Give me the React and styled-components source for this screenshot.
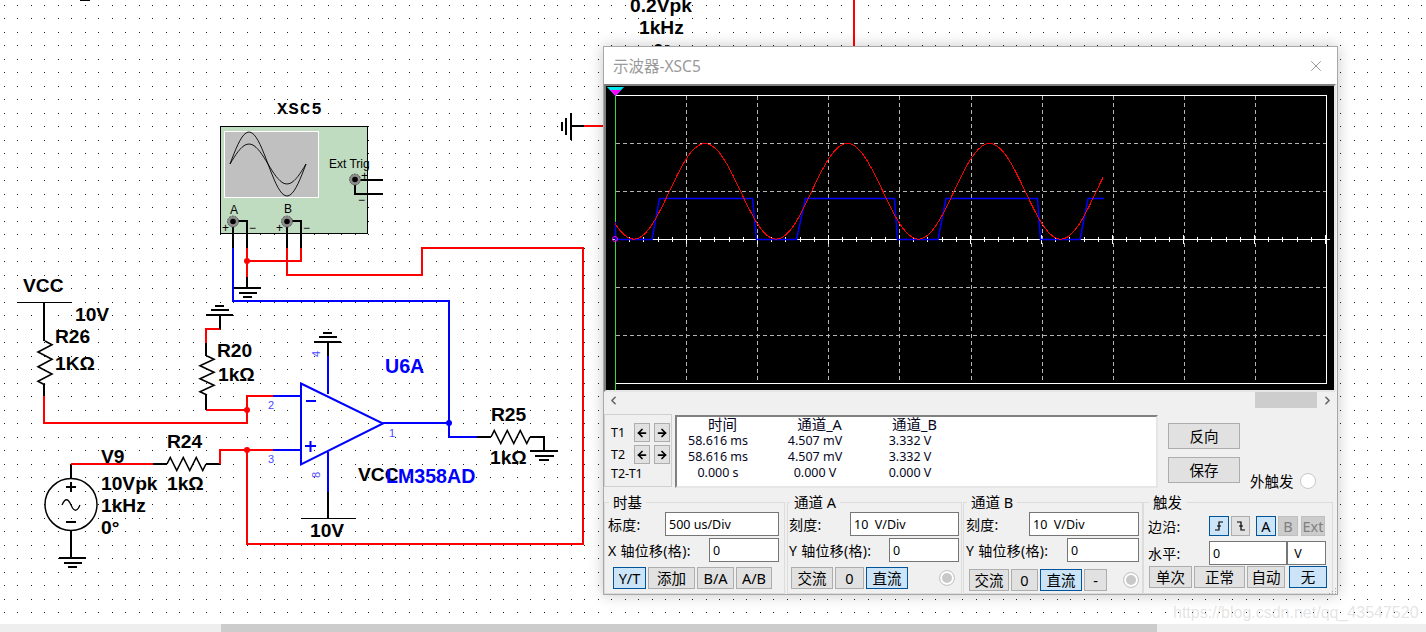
import React from "react";
import styled, { createGlobalStyle } from "styled-components";
import { ArrowLeft, ArrowRight, ChevronLeft, ChevronRight, X } from "lucide-react";

const RED = "#ff0000";
const BLUE = "#0000ff";
const BLACK = "#000000";

// grid dots of the schematic sheet
function dotsPath() {
  let d = "";
  for (let i = 0; i < 106; i++) {
    for (let j = 0; j < 47; j++) {
      const x = Math.floor(4 + i * 13.5);
      const y = Math.floor(5 + j * 13.5);
      d += `M${x} ${y}h1v1h-1z`;
    }
  }
  return d;
}

function zigH(x0, x1, y, amp = 6.5) {
  const step = (x1 - x0) / 6;
  let d = `M${x0} ${y}`;
  [-1, 1, -1, 1, -1, 1].forEach((s, i) => {
    d += `L${x0 + step * (i + 0.5)} ${y + s * amp}`;
  });
  return `${d}L${x1} ${y}`;
}

function zigV(x, y0, y1, amp = 7) {
  const step = (y1 - y0) / 6;
  let d = `M${x} ${y0}`;
  [1, -1, 1, -1, 1, -1].forEach((s, i) => {
    d += `L${x + s * amp} ${y0 + step * (i + 0.5)}`;
  });
  return `${d}L${x} ${y1}`;
}

function sinePath(amp) {
  let d = "";
  for (let x = 230; x <= 307; x += 2) {
    const y = 164 - amp * Math.sin(((x - 230) / 76) * Math.PI * 2);
    d += `${d ? "L" : "M"}${x} ${y.toFixed(1)}`;
  }
  return d;
}

function redTrace() {
  let d = "";
  for (let x = 615; x <= 1104; x += 2) {
    const y = 191.3 - 47.8 * Math.cos(((x - 705) / 142.3) * Math.PI * 2);
    d += `${d ? "L" : "M"}${x} ${y.toFixed(1)}`;
  }
  return d;
}

const BLUE_TRACE =
  "M615.5 222V239.5H652L659.5 198.5H752.5L756.5 239.5H796.5L805.5 198.5H894.5L897.5 239.5H938L946 198.5H1037.5L1040.5 239.5H1080L1088 198.5H1104";

const TIME_TICKS = Array.from({ length: 51 }, (_, i) => 615.5 + i * 14.2);
const V_GRID = [686.5, 757.5, 828.5, 899.5, 971.5, 1042.5, 1113.5, 1184.5, 1255.5];
const H_GRID = [143.5, 191.5, 287.5, 335.5];

const WIRES = [
  // scope A channel
  [BLACK, "M233 221V248"],
  [BLUE, "M233 248V301H449V423"],
  [BLACK, "M233 221H247V248"],
  [RED, "M247 248V277"],
  [BLACK, "M247 277V287"],
  [RED, "M247 261H301V248"],
  [BLACK, "M301 248V221H287"],
  [BLACK, "M287 221V248"],
  [RED, "M287 248V275H422V248H583V544H247V450"],
  // VCC and R26
  [BLACK, "M44 303V341"],
  [BLACK, "M44 385V396"],
  [RED, "M44 396V423H247V396H273"],
  [BLUE, "M273 396H301"],
  // R20
  [RED, "M247 410H206"],
  [BLACK, "M206 410V395"],
  [BLACK, "M206 356V343"],
  [RED, "M206 343V329H220"],
  [BLACK, "M220 329V315"],
  // V9 and R24
  [BLACK, "M71 478V464"],
  [RED, "M71 464H153"],
  [BLACK, "M153 464H167"],
  [BLACK, "M206 464H220"],
  [RED, "M220 464V450H273"],
  [BLUE, "M273 450H301"],
  [BLACK, "M71 531V557"],
  // op amp supply pins
  [BLACK, "M328 342V356"],
  [BLUE, "M328 356V394"],
  [BLUE, "M328 452V492"],
  [BLACK, "M328 492V518"],
  // output and R25
  [BLUE, "M383 423H449V437H477"],
  [BLACK, "M477 437H491"],
  [BLACK, "M530 437H544V450"],
  // ext trig
  [BLACK, "M355 180H383M355 180V194H383"],
  // sheet leftovers behind the window
  [RED, "M584 126H604"],
  [BLACK, "M571 126H584"],
  [RED, "M854 0V48"],
  [BLACK, "M80 0H90"],
];

const THIN_LINES = ["M17 302.500H72", "M301 518.500H356"];

const GROUNDS = [
  [234, 287.5, 27, 1],
  [59, 557.5, 27, 1],
  [530, 450.5, 28, 1],
  [206, 314.5, 27, -1],
  [314, 341.5, 27, -1],
];

const LABELS = [
  ["VCC", 23, 292],
  ["10V", 75, 321],
  ["R26", 55, 343],
  ["1KΩ", 55, 370],
  ["R20", 217, 357],
  ["1kΩ", 218, 381],
  ["R24", 167, 448],
  ["V9", 101, 463],
  ["10Vpk", 101, 490],
  ["1kΩ", 167, 490],
  ["1kHz", 101, 512],
  ["0°", 101, 534],
  ["VCC", 358, 481],
  ["10V", 310, 537],
  ["R25", 491, 421],
  ["1kΩ", 490, 464],
  ["0.2Vpk", 630, 12],
  ["1kHz", 639, 34],
  ["0°", 653, 57],
];

function Ground({ x, y, w, dir }) {
  return (
    <>
      <Wire $color={BLACK} d={`M${x} ${y}h${w}`} />
      <Wire $color={BLACK} d={`M${x + 5} ${y + dir * 5}h${w - 9}`} />
      <Wire $color={BLACK} d={`M${x + 9} ${y + dir * 9}h${w - 18}`} />
    </>
  );
}

function Terminal({ x, y }) {
  return (
    <>
      <circle cx={x} cy={y} r="5.5" fill="#8c8c8c" stroke="#555" strokeDasharray="2 1" />
      <circle cx={x} cy={y} r="2.8" fill="#000" />
    </>
  );
}

function Schematic() {
  return (
    <Sheet viewBox="0 0 1426 624">
      <path d={dotsPath()} fill="#1a1a1a" shapeRendering="crispEdges" />

      {/* XSC5 */}
      <MonoLabel x="277" y="114">XSC5</MonoLabel>
      <rect x="220.5" y="126.5" width="147" height="107" fill="#c0dcc0" stroke="#000" />
      <rect x="224.5" y="131.5" width="94" height="66" fill="#c0c0c0" stroke="#fff" />
      <path d={sinePath(32)} fill="none" stroke="#000" strokeWidth="0.9" />
      <path d={sinePath(20)} fill="none" stroke="#000" strokeWidth="0.9" />
      <SmallLabel x="329" y="168">Ext Trig</SmallLabel>
      <SmallLabel x="230" y="214">A</SmallLabel>
      <SmallLabel x="284" y="213">B</SmallLabel>
      <SmallLabel x="222" y="232">+</SmallLabel>
      <SmallLabel x="249" y="232">−</SmallLabel>
      <SmallLabel x="276" y="232">+</SmallLabel>
      <SmallLabel x="303" y="232">−</SmallLabel>
      <SmallLabel x="361" y="180">+</SmallLabel>
      <SmallLabel x="358" y="204">−</SmallLabel>

      {WIRES.map(([color, d]) => (
        <Wire key={d} $color={color} d={d} />
      ))}
      {THIN_LINES.map((d) => (
        <Thin key={d} d={d} />
      ))}
      {GROUNDS.map(([x, y, w, dir]) => (
        <Ground key={`${x}-${y}`} x={x} y={y} w={w} dir={dir} />
      ))}

      {/* ground stub left of the window */}
      <Wire $color={BLACK} d="M571 113V140" />
      <Wire $color={BLACK} d="M566 118V135" />
      <Wire $color={BLACK} d="M562 122V131" />

      <Terminal x={233} y={221.5} />
      <Terminal x={287} y={221.5} />
      <Terminal x={355} y={179.5} />

      {/* resistors */}
      <Zig d={zigV(45, 341, 385)} />
      <Zig d={zigV(207, 356, 395)} />
      <Zig d={zigH(167, 206, 464)} />
      <Zig d={zigH(491, 530, 437)} />

      {/* AC source */}
      <circle cx="71" cy="504.5" r="26" fill="none" stroke="#000" strokeWidth="1.5" />
      <Wire $color={BLACK} d="M66 487h10M71 482v10M66 522h10" />
      <path d="M62 505c3-7 6-7 9 0s6 7 9 0" fill="none" stroke="#000" strokeWidth="1.3" />

      {/* op amp */}
      <path d="M301 383.5L383 423.5L301 464.5Z" fill="none" stroke={BLUE} strokeWidth="2" />
      <path d="M306 401h10M305 446h11M310.500 441v11" stroke={BLUE} strokeWidth="2" fill="none" />
      <circle cx="247" cy="410" r="3" fill={RED} />
      <circle cx="247" cy="450" r="3" fill={RED} />
      <circle cx="247" cy="261" r="3" fill={RED} />
      <circle cx="449" cy="423" r="3" fill={BLUE} />

      {LABELS.map(([text, x, y]) => (
        <Label key={`${text}-${x}`} x={x} y={y}>{text}</Label>
      ))}
      <Label $blue x="385" y="373">U6A</Label>
      <Label $blue x="386" y="483">LM358AD</Label>

      <Pin x="268" y="409">2</Pin>
      <Pin x="268" y="463">3</Pin>
      <Pin x="389" y="437">1</Pin>
      <Pin transform="rotate(-90 320 357)" x="320" y="357">4</Pin>
      <Pin transform="rotate(-90 320 478)" x="320" y="478">8</Pin>
    </Sheet>
  );
}

function ScopeScreen() {
  return (
    <Screen>
      <svg width="728" height="304" viewBox="606 86 728 304">
        {V_GRID.map((x) => (
          <GridLine key={x} d={`M${x} 96V383`} />
        ))}
        {H_GRID.map((y) => (
          <GridLine key={y} d={`M616 ${y}H1326`} />
        ))}
        <path d="M615 95.500H1326.500V383.500H615" fill="none" stroke="#fff" shapeRendering="crispEdges" />
        <path d="M612 239.500H1330" stroke="#fff" strokeWidth="1.5" shapeRendering="crispEdges" />
        {TIME_TICKS.map((x, i) => (
          <path
            key={x}
            d={i % 5 === 0 ? `M${x} 235V244` : `M${x} 237V242`}
            stroke="#fff"
            shapeRendering="crispEdges"
          />
        ))}
        <path d="M615.500 90V390" stroke="#30e030" shapeRendering="crispEdges" />
        <path d={BLUE_TRACE} fill="none" stroke={BLUE} strokeWidth="1.5" />
        <path d={redTrace()} fill="none" stroke={RED} shapeRendering="crispEdges" />
        <path d="M607 87H624L615.500 96Z" fill="#00e5ee" />
        <path d="M610 90H621L615.500 96Z" fill="#ff00ff" />
        <circle cx="615" cy="239" r="2.500" fill="none" stroke="#ff00ff" />
      </svg>
    </Screen>
  );
}

function CursorRow({ name, $mt }) {
  return (
    <CursorLine $mt={$mt}>
      <CursorName>{name}</CursorName>
      <ArrowBtn>
        <ArrowLeft size={12} strokeWidth={3.5} color="#000" />
      </ArrowBtn>
      <ArrowBtn>
        <ArrowRight size={12} strokeWidth={3.5} color="#000" />
      </ArrowBtn>
    </CursorLine>
  );
}

function RisingEdge({ falling }) {
  return (
    <svg width="12" height="12" viewBox="0 0 12 12">
      <path
        d={falling ? "M2 2H6V10H10M4 6H8" : "M2 10H6V2H10M4 6H8"}
        fill="none"
        stroke="#000"
        strokeWidth="1.2"
      />
    </svg>
  );
}

const READOUT = [
  ["时间", "通道_A", "通道_B"],
  ["58.616 ms", "4.507 mV", "3.332 V"],
  ["58.616 ms", "4.507 mV", "3.332 V"],
  ["0.000 s", "0.000 V", "0.000 V"],
];

export default function App() {
  return (
    <>
      <GlobalStyle />
      <Page>
        <Canvas>
          <Schematic />
          <ScopeWindow>
            <TitleBar>
              <span>示波器-XSC5</span>
              <X size={18} strokeWidth={1} color="#777" />
            </TitleBar>
            <ScopeScreen />
            <HScroll>
              <ChevronLeft size={13} strokeWidth={3} color="#666" />
              <ScrollThumb />
              <ChevronRight size={13} strokeWidth={3} color="#666" />
            </HScroll>

            <ReadoutRow>
              <CursorPanel>
                <CursorRow name="T1" $mt={8} />
                <CursorRow name="T2" $mt={3} />
                <CursorName $mt={2}>T2-T1</CursorName>
              </CursorPanel>
              <ReadoutBox>
                {READOUT.map((row, r) =>
                  row.map((cell, c) => (
                    <ReadoutCell key={`${r}-${c}`} $head={r === 0}>{cell}</ReadoutCell>
                  ))
                )}
              </ReadoutBox>
              <SideButtons>
                <Btn $w={72} $h={26}>反向</Btn>
                <Btn $w={72} $h={26}>保存</Btn>
              </SideButtons>
              <ExtTrigger>
                <span>外触发</span>
                <Radio />
              </ExtTrigger>
            </ReadoutRow>

            <Controls>
              <Group $w={181} $l={3} $r={5}>
                <Legend>时基</Legend>
                <Row>
                  <FieldLabel>标度:</FieldLabel>
                  <Field $w={114} readOnly value="500 us/Div" />
                </Row>
                <Row>
                  <FieldLabel>X 轴位移(格):</FieldLabel>
                  <Field $w={70} readOnly value="0" />
                </Row>
                <ButtonRow $mt={5} $ml={5}>
                  <Btn $w={33} $on>Y/T</Btn>
                  <Btn $w={47}>添加</Btn>
                  <Btn $w={37}>B/A</Btn>
                  <Btn $w={36}>A/B</Btn>
                </ButtonRow>
              </Group>

              <Group $w={175} $ml={2} $l={1} $r={2}>
                <Legend>通道 A</Legend>
                <Row>
                  <FieldLabel>刻度:</FieldLabel>
                  <Field $w={109} readOnly value="10  V/Div" />
                </Row>
                <Row>
                  <FieldLabel>Y 轴位移(格):</FieldLabel>
                  <Field $w={70} readOnly value="0" />
                </Row>
                <ButtonRow $mt={5} $ml={2}>
                  <Btn $w={42}>交流</Btn>
                  <Btn $w={29}>0</Btn>
                  <Btn $w={42} $on>直流</Btn>
                  <Radio $on $left={29} />
                </ButtonRow>
              </Group>

              <Group $w={180} $ml={1} $l={2} $r={3}>
                <Legend>通道 B</Legend>
                <Row>
                  <FieldLabel>刻度:</FieldLabel>
                  <Field $w={110} readOnly value="10  V/Div" />
                </Row>
                <Row>
                  <FieldLabel>Y 轴位移(格):</FieldLabel>
                  <Field $w={72} readOnly value="0" />
                </Row>
                <ButtonRow $mt={7} $ml={3}>
                  <Btn $w={40}>交流</Btn>
                  <Btn $w={27}>0</Btn>
                  <Btn $w={42} $on>直流</Btn>
                  <Btn $w={23}>-</Btn>
                  <Radio $on $left={14} />
                </ButtonRow>
              </Group>

              <Group $w={190} $l={4} $r={5}>
                <Legend>触发</Legend>
                <Row $mt={4} $h={20}>
                  <FieldLabel>边沿:</FieldLabel>
                  <EdgeButtons>
                    <Btn $w={20} $h={20} $on><RisingEdge /></Btn>
                    <Btn $w={19} $h={20}><RisingEdge falling /></Btn>
                    <Btn $w={20} $h={20} $on $ml={4}>A</Btn>
                    <Btn $w={20} $h={20} $off>B</Btn>
                    <Btn $w={24} $h={20} $off $ml={1}>Ext</Btn>
                  </EdgeButtons>
                </Row>
                <Row $mt={5} $h={24}>
                  <FieldLabel>水平:</FieldLabel>
                  <LevelGroup>
                    <Field $w={78} readOnly value="0" />
                    <Field $w={39} readOnly value=" V" />
                  </LevelGroup>
                </Row>
                <ButtonRow $mt={1} $ml={1}>
                  <Btn $w={43}>单次</Btn>
                  <Btn $w={51}>正常</Btn>
                  <Btn $w={38}>自动</Btn>
                  <Btn $w={38} $on $ml={2}>无</Btn>
                </ButtonRow>
              </Group>
            </Controls>
            <Grip viewBox="0 0 8 6">
              <path d="M6 0h1v1h-1zM3 3h1v1h-1zM6 3h1v1h-1zM0 5h1v1h-1zM3 5h1v1h-1zM6 5h1v1h-1z" fill="#aaa" />
            </Grip>
          </ScopeWindow>
          <Watermark>https://blog.csdn.net/qq_43547520</Watermark>
        </Canvas>
        <PageScroll>
          <PageThumb />
        </PageScroll>
      </Page>
    </>
  );
}

const GlobalStyle = createGlobalStyle`
  html, body {
    margin: 0;
    padding: 0;
    background: #ffffff;
  }
`;

const UI_FONT = `"Noto Sans", "Noto Sans CJK SC", sans-serif`;

const Page = styled.div`
  width: 1426px;
  height: 632px;
  display: flex;
  flex-direction: column;
  overflow: hidden;
  background: #ffffff;
`;

const Canvas = styled.div`
  position: relative;
  flex: 1;
  overflow: hidden;
`;

const Sheet = styled.svg`
  display: block;
  width: 1426px;
  height: 624px;
`;

const Wire = styled.path`
  fill: none;
  stroke: ${(p) => p.$color};
  stroke-width: 2;
  shape-rendering: crispEdges;
`;

const Thin = styled.path`
  fill: none;
  stroke: #000000;
  stroke-width: 1;
  shape-rendering: crispEdges;
`;

const Zig = styled.path`
  fill: none;
  stroke: #000000;
  stroke-width: 1.6;
`;

const Label = styled.text`
  font-family: "Liberation Sans", Arial, sans-serif;
  font-size: ${(p) => (p.$blue ? 19.6 : 19.2)}px;
  font-weight: 700;
  fill: ${(p) => (p.$blue ? "#0000ff" : "#000000")};
`;

const MonoLabel = styled.text`
  font-family: "Liberation Mono", monospace;
  font-size: 17px;
  font-weight: 700;
  letter-spacing: 1.300px;
`;

const SmallLabel = styled.text`
  font-family: "Liberation Sans", Arial, sans-serif;
  font-size: 12px;
  fill: #000000;
`;

const Pin = styled.text`
  font-family: "Liberation Sans", Arial, sans-serif;
  font-size: 11px;
  fill: #4a4aff;
`;

const ScopeWindow = styled.div`
  position: absolute;
  left: 603px;
  top: 46px;
  width: 735px;
  height: 549px;
  box-sizing: border-box;
  border: 1px solid #a8a8a8;
  background: #f0f0f0;
  box-shadow: 0 0 14px rgba(0, 0, 0, 0.22);
  font-family: ${UI_FONT};
  color: #000000;
`;

const TitleBar = styled.div`
  height: 37px;
  padding: 0 12px 0 9px;
  display: flex;
  align-items: center;
  justify-content: space-between;
  background: #ffffff;
  color: #9a9a9a;
  font-size: 15.500px;
`;

const Screen = styled.div`
  width: 732px;
  height: 308px;
  box-sizing: border-box;
  border: 2px solid;
  border-color: #808080 #e6e6e6 #e6e6e6 #808080;
  background: #000000;

  svg {
    display: block;
  }
`;

const HScroll = styled.div`
  height: 18px;
  box-sizing: border-box;
  display: flex;
  align-items: center;
  padding: 0 3px 2px 3px;
`;

const ScrollThumb = styled.div`
  width: 62px;
  height: 16px;
  margin: 0 4px 0 auto;
  align-self: flex-start;
  background: #cdcdcd;
`;

const ReadoutRow = styled.div`
  height: 75px;
  margin-top: 4px;
  display: flex;
  align-items: flex-start;
`;

const CursorPanel = styled.div`
  width: 68px;
  height: 73px;
  box-sizing: border-box;
  border: 1px solid #d0d0d0;
  padding-left: 6px;
`;

const CursorLine = styled.div`
  display: flex;
  align-items: center;
  gap: 4px;
  margin-top: ${(p) => p.$mt}px;
`;

const CursorName = styled.div`
  font-size: 12.500px;
  line-height: 16px;
  width: 19px;
  margin-top: ${(p) => p.$mt || 0}px;
  white-space: nowrap;
`;

const ArrowBtn = styled.div`
  width: 16px;
  height: 19px;
  box-sizing: border-box;
  display: flex;
  align-items: center;
  justify-content: center;
  background: #e1e1e1;
  border: 1px solid #adadad;
`;

const ReadoutBox = styled.div`
  width: 483px;
  height: 73px;
  margin: 1px 0 0 3px;
  box-sizing: border-box;
  border: 2px solid;
  border-color: #808080 #e6e6e6 #e6e6e6 #808080;
  background: #ffffff;
  display: grid;
  grid-template-columns: 82px 112px 78px;
  grid-template-rows: 16px 16px 16px 16px;
  align-content: start;
`;

const ReadoutCell = styled.div`
  text-align: center;
  padding-left: ${(p) => (p.$head ? 9 : 0)}px;
  font-size: ${(p) => (p.$head ? 14.5 : 12.5)}px;
  line-height: ${(p) => (p.$head ? 14 : 16)}px;
  color: #06061e;
  white-space: nowrap;
`;

const SideButtons = styled.div`
  margin: 9px 0 0 10px;
  display: flex;
  flex-direction: column;
  gap: 8px;
`;

const ExtTrigger = styled.div`
  margin: 57px 0 0 10px;
  display: flex;
  align-items: center;
  gap: 6px;
  font-size: 14.500px;
  line-height: 20px;
`;

const Radio = styled.span`
  display: block;
  flex: none;
  width: 16px;
  height: 16px;
  box-sizing: border-box;
  margin-left: ${(p) => p.$left || 0}px;
  border-radius: 50%;
  border: 1px solid #c8c8c8;
  background: ${(p) => (p.$on ? "#c8c8c8" : "#ffffff")};
  box-shadow: inset 0 0 0 ${(p) => (p.$on ? 2 : 0)}px #ffffff;
`;

const Controls = styled.div`
  display: flex;
  margin-top: 3px;
`;

const Group = styled.fieldset`
  width: ${(p) => p.$w}px;
  height: 102px;
  box-sizing: border-box;
  margin: 0 0 0 ${(p) => p.$ml || 0}px;
  padding: 0 ${(p) => p.$r}px 0 ${(p) => p.$l}px;
  border: 1px solid #dcdcdc;
  min-width: 0;
`;

const Legend = styled.legend`
  margin-left: 1px;
  padding: 0 4px;
  font-size: 14.500px;
  line-height: 20px;
  height: 20px;
`;

const Row = styled.div`
  display: flex;
  align-items: center;
  justify-content: space-between;
  height: ${(p) => p.$h || 24}px;
  margin-top: ${(p) => (p.$mt === undefined ? 2 : p.$mt)}px;
  &:first-of-type {
    margin-top: ${(p) => p.$mt || 0}px;
  }
`;

const FieldLabel = styled.span`
  font-size: 14px;
  letter-spacing: 0.300px;
  white-space: nowrap;
`;

const Field = styled.input`
  width: ${(p) => p.$w}px;
  height: 24px;
  box-sizing: border-box;
  padding: 0 3px;
  border: 1px solid #767676;
  border-radius: 0;
  outline: none;
  background: #ffffff;
  font-family: ${UI_FONT};
  font-size: 12.500px;
  color: #000000;
  white-space: pre;
`;

const ButtonRow = styled.div`
  display: flex;
  align-items: center;
  gap: 2px;
  margin: ${(p) => p.$mt}px 0 0 ${(p) => p.$ml}px;
`;

const EdgeButtons = styled.div`
  display: flex;
  gap: 2px;
  margin-right: 2px;
`;

const LevelGroup = styled.div`
  display: flex;
  margin-right: 1px;
`;

const Btn = styled.button`
  width: ${(p) => p.$w}px;
  height: ${(p) => p.$h || 22}px;
  margin: 0 0 0 ${(p) => p.$ml || 0}px;
  padding: 0;
  flex: none;
  display: flex;
  align-items: center;
  justify-content: center;
  box-sizing: border-box;
  border: 1px solid ${(p) => (p.$on ? "#005499" : p.$off ? "#bfbfbf" : "#adadad")};
  background: ${(p) => (p.$on ? "#cce4f7" : p.$off ? "#cccccc" : "#e1e1e1")};
  color: ${(p) => (p.$off ? "#808080" : "#000000")};
  font-family: ${UI_FONT};
  font-size: 14.500px;
  line-height: 1;
`;

const Grip = styled.svg`
  position: absolute;
  right: 0;
  bottom: 0;
  width: 8px;
  height: 6px;
`;

const Watermark = styled.div`
  position: absolute;
  left: 1173px;
  top: 603px;
  font-family: "Liberation Sans", Arial, sans-serif;
  font-size: 16px;
  line-height: 20px;
  color: rgba(170, 170, 170, 0.33);
  white-space: nowrap;
`;

const GridLine = styled.path`
  fill: none;
  stroke: #b4b4b4;
  stroke-dasharray: 4 3;
  shape-rendering: crispEdges;
`;

const PageScroll = styled.div`
  height: 8px;
  flex: none;
  background: #eeeeee;
`;

const PageThumb = styled.div`
  width: 936px;
  height: 8px;
  margin-left: 221px;
  background: #cccccc;
`;
